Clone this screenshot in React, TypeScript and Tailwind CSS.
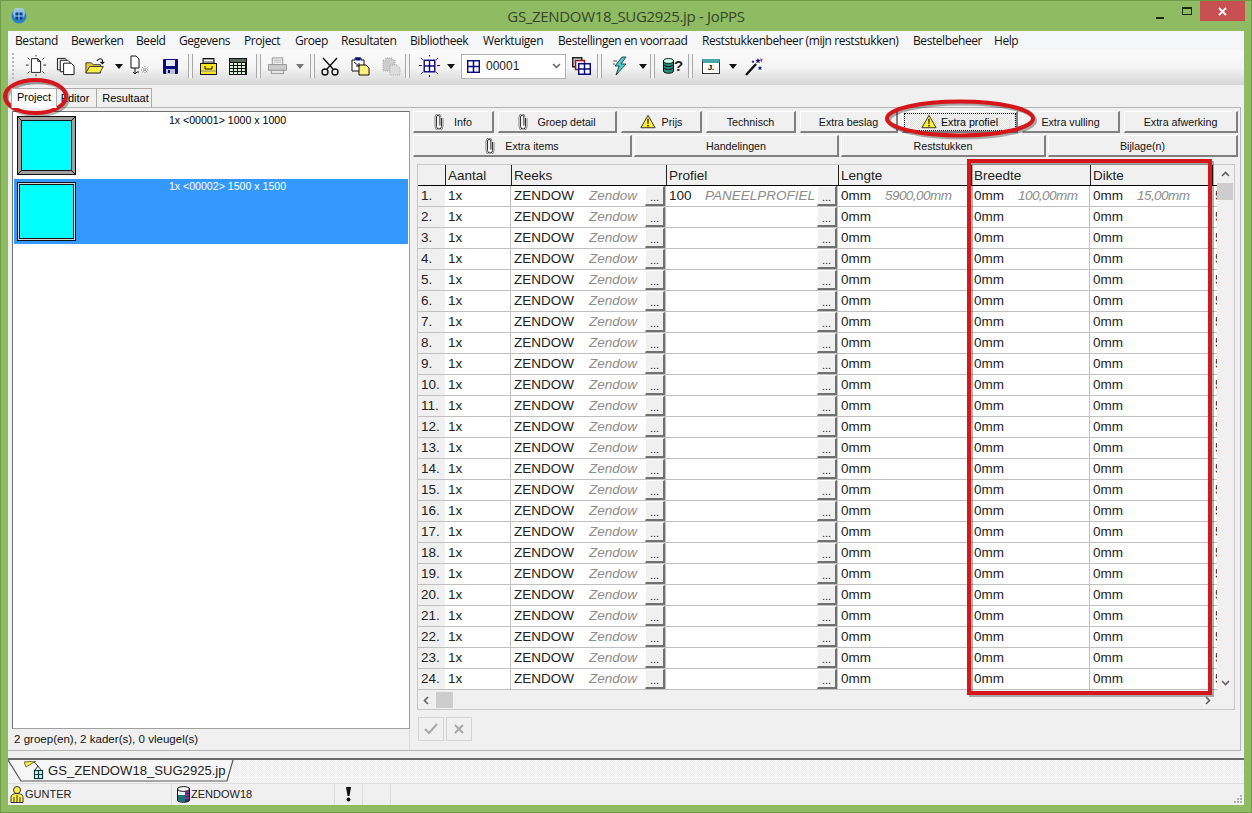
import React from "react";

const Clip = () => (
  <svg width="10" height="16" viewBox="0 0 10 16" fill="none" stroke="#333" strokeWidth="1">
    <path d="M7.5 4v8.5a2.5 2.5 0 0 1-5 0V3a1.7 1.7 0 0 1 3.4 0v8.5" />
    <path d="M9 4v8.5a4 4 0 0 1-8 0V3a3 3 0 0 1 6 0" stroke="#888" />
  </svg>
);
const Warn = () => (
  <svg width="16" height="15" viewBox="0 0 18 16">
    <path d="M9 1 17 15H1Z" fill="#ffee33" stroke="#222" strokeWidth="1" />
    <path d="M8.2 5h1.6l-.3 6h-1zM8.2 12h1.6v1.6H8.2z" fill="#111" />
  </svg>
);
const Rays = () => (
  <g stroke="#111" strokeWidth="1">
    <path d="M1 11h3M20 11h3M3 3l2 2M21 3l-2 2M3 20l2-2M21 20l-2-2M12 0v1.5M12 21v2" />
  </g>
);
const NewDoc = () => (
  <svg width="22" height="22" viewBox="0 0 24 24" fill="none">
    <Rays />
    <path d="M7 4h7l3 3v12H7Z" fill="#fff" stroke="#111" />
    <path d="M14 4v3h3" stroke="#111" />
  </svg>
);
const CopyDoc = () => (
  <svg width="19" height="19" viewBox="0 0 20 20" fill="#fff" stroke="#111">
    <path d="M1.5 1.5h8l2 2v10h-10Z" fill="#eee" />
    <path d="M4.5 3.5h8l2 2v10h-10Z" />
    <path d="M8 6.5h8l3 3v9H8Z" />
  </svg>
);
const Folder = () => (
  <svg width="22" height="19" viewBox="0 0 24 20">
    <path d="M1 6h6l2 2h8v9H1Z" fill="#e8c83a" stroke="#333" />
    <path d="M1 17l4-7h15l-4 7Z" fill="#fff04a" stroke="#333" />
    <path d="M13 4c2-3 5-3 6-1v3m-2-1 2 2 2-2" fill="none" stroke="#111" strokeWidth="1.2" />
  </svg>
);
const Caret = ({ gray }: { gray?: boolean }) => (
  <svg width="8" height="5" viewBox="0 0 8 5">
    <path d="M0 0h8L4 5Z" fill={gray ? "#777" : "#111"} />
  </svg>
);
const DocArrow = () => (
  <svg width="20" height="22" viewBox="0 0 20 22" fill="none">
    <path d="M1 1h5l3 3v9H1Z" fill="#fff" stroke="#111" />
    <path d="M5 13v6m-2-2 2 2 2-2M7 17h2" stroke="#111" />
    <g stroke="#888" strokeDasharray="1 1">
      <path d="M11 15h8M15 11v8M12 12l6 6M18 12l-6 6" />
    </g>
  </svg>
);
const Save = () => (
  <svg width="15" height="15" viewBox="0 0 15 15">
    <rect width="15" height="15" rx="1" fill="#0b0b80" />
    <rect x="3" y="1" width="9" height="6" fill="#e8e8f4" />
    <rect x="3" y="10" width="9" height="5" fill="#c0c0d0" />
    <rect x="5" y="11" width="2" height="3" fill="#0b0b80" />
  </svg>
);
const BoxIcon = () => (
  <svg width="17" height="17" viewBox="0 0 17 17">
    <rect x="3" y="0.5" width="11" height="5" fill="#999" stroke="#111" />
    <path d="M4 2.5h9" stroke="#fff" />
    <rect x="0.5" y="5.5" width="16" height="11" fill="#f8e71c" stroke="#111" />
    <path d="M5 8v3h7V8" fill="none" stroke="#111" />
    <path d="M1 13h15" stroke="#888" />
  </svg>
);
const TableIcon = () => (
  <svg width="18" height="17" viewBox="0 0 18 17">
    <rect width="18" height="17" fill="#111" />
    <rect x="1" y="1" width="16" height="3" fill="#5a6a5a" />
    {[5, 8, 11, 14].map((y) =>
      [1, 5, 9, 13].map((x) => <rect key={`${x}-${y}`} x={x} y={y} width="3" height="2" fill="#dcefd8" />)
    )}
  </svg>
);
const Printer = () => (
  <svg width="19" height="18" viewBox="0 0 20 18">
    <rect x="4.5" y="0.5" width="11" height="7" fill="#eee" stroke="#999" />
    <path d="M6 3h8M6 5h8" stroke="#bbb" />
    <rect x="0.5" y="7.5" width="19" height="6" fill="#ccc" stroke="#999" />
    <rect x="3.5" y="13.5" width="13" height="3.5" fill="#e4e4e4" stroke="#999" />
  </svg>
);
const Scissors = () => (
  <svg width="18" height="19" viewBox="0 0 18 19" fill="none" stroke="#111">
    <path d="M2 1 12 12M16 1 6 12" strokeWidth="1.4" />
    <circle cx="4" cy="15" r="3" strokeWidth="1.4" />
    <circle cx="14" cy="15" r="3" strokeWidth="1.4" />
  </svg>
);
const Paste = ({ gray }: { gray?: boolean }) => (
  <svg width="19" height="19" viewBox="0 0 19 19">
    <path
      d="M1 3h3V1h6v2h3v11H1Z"
      fill={gray ? "#ccc" : "#fff"}
      stroke={gray ? "#aaa" : "#111"}
      strokeDasharray={gray ? "1 1" : undefined}
    />
    {!gray && <rect x="4.5" y="0.5" width="5" height="3" fill="#0b0b80" />}
    <path
      d="M8 8h7l3 3v7H8Z"
      fill={gray ? "#ddd" : "#fff27a"}
      stroke={gray ? "#aaa" : "#111"}
      strokeDasharray={gray ? "1 1" : undefined}
    />
    {!gray && <path d="M3 5l5 4m0-3v3H5" fill="none" stroke="#111" />}
  </svg>
);
const WinGrid = ({ size = 13 }: { size?: number }) => (
  <svg width={size} height={size} viewBox="0 0 15 15">
    <rect x="0.75" y="0.75" width="13.5" height="13.5" fill="#fff" stroke="#0b0b80" strokeWidth="1.8" />
    <path d="M7.5 1v13M1 7.5h13" stroke="#0b0b80" strokeWidth="1.8" />
  </svg>
);
const WinRays = () => (
  <svg width="23" height="23" viewBox="0 0 24 24" fill="none">
    <Rays />
    <rect x="6.5" y="5.5" width="11" height="12" fill="#fff" stroke="#0b0b80" strokeWidth="1.5" />
    <path d="M12 6v11M7 11.5h10" stroke="#0b0b80" strokeWidth="1.5" />
  </svg>
);
const WinStack = () => (
  <svg width="19" height="18" viewBox="0 0 19 18" fill="none">
    <rect x="0.75" y="0.75" width="9" height="9" stroke="#222" strokeWidth="1.5" fill="#ddd" />
    <rect x="3.5" y="3.5" width="9" height="9" stroke="#8c1c1c" strokeWidth="1.5" fill="#eee" />
    <rect x="6.75" y="6.75" width="11.5" height="10.5" stroke="#0b0b80" strokeWidth="1.5" fill="#fff" />
    <path d="M12.5 7v10M7 12h11" stroke="#0b0b80" strokeWidth="1.5" />
  </svg>
);
const Bolt = () => (
  <svg width="15" height="20" viewBox="0 0 15 20">
    <path d="M9 1 2 10h4l-3 9 10-11H8l5-7Z" fill="#45d0d0" stroke="#222" strokeWidth="0.8" />
    <path d="M0 5h4M0 8h2" stroke="#555" />
  </svg>
);
const Db = () => (
  <svg width="11" height="16" viewBox="0 0 11 16">
    <path d="M0.5 3v10c0 3 10 3 10 0V3Z" fill="#2b8a7a" stroke="#111" />
    <ellipse cx="5.5" cy="3" rx="5" ry="2.4" fill="#cfe" stroke="#111" />
    <path d="M1 7c2 2 7 2 9 0M1 10c2 2 7 2 9 0" stroke="#111" fill="none" />
  </svg>
);
const Wand = () => (
  <svg width="19" height="19" viewBox="0 0 19 19">
    <path d="M1 18 11 7" stroke="#111" strokeWidth="2.4" />
    <path d="M13 1l.8 1.8 1.9.2-1.4 1.3.4 1.9-1.7-1-1.7 1 .4-1.9L10.3 3l1.9-.2Z" fill="#14147a" />
    <path d="M15.5 0.5l.8 1.5 1.7.2-1.2 1.1.3 1.7-1.6-.8Z" fill="#c02030" />
    <path d="M15 9l.7 1.3 1.5.2-1.1 1 .3 1.5-1.4-.7-1.4.7.3-1.5-1.1-1 1.5-.2Z" fill="#14147a" />
    <path d="M8 3l.5 1 1 .2-.8.7.2 1-.9-.5-.9.5.2-1-.8-.7 1-.2Z" fill="#14147a" />
  </svg>
);
const AppIcon = () => (
  <svg width="16" height="16" viewBox="0 0 16 16">
    <circle cx="8" cy="8" r="7.5" fill="#2f7fc8" />
    <circle cx="8" cy="5" r="6" fill="#bcdcf4" opacity="0.7" />
    <rect x="4.5" y="4.5" width="7" height="7" fill="#0a3f8a" />
    <path d="M8 4.5v7M4.5 8h7" stroke="#9fd0f4" />
  </svg>
);
const User = () => (
  <svg width="14" height="17" viewBox="0 0 14 17">
    <circle cx="7" cy="4" r="3.5" fill="#fff04a" stroke="#333" />
    <path d="M1 16.5v-5c0-3 3-4 6-4s6 1 6 4v5Z" fill="#fff04a" stroke="#333" />
    <path d="M4 11v5M7 9v7M10 11v5" stroke="#333" />
  </svg>
);
const DbColor = () => (
  <svg width="13" height="17" viewBox="0 0 13 17">
    <path d="M0.5 3v11c0 3 12 3 12 0V3Z" fill="#3a2a6a" stroke="#111" />
    <path d="M1 3v6h7V3Z" fill="#e8f0f0" />
    <path d="M1 9v6c2 1 4 1 7 1V9Z" fill="#20707a" />
    <path d="M8 6h4M8 9h4M8 12h4" stroke="#d040b0" />
    <ellipse cx="6.5" cy="3" rx="6" ry="2.4" fill="#f4f4f4" stroke="#111" />
  </svg>
);
const TabIcon = () => (
  <svg width="20" height="20" viewBox="0 0 20 20" fill="none">
    <path d="M0 1 12 0 2 6Z" fill="#f2f040" stroke="#333" strokeWidth="0.7" />
    <path d="M10 1l4 4" stroke="#333" />
    <path d="M14 5l-3 4M14 5l3 4" stroke="#333" />
    <rect x="10.5" y="9.5" width="8" height="8" fill="#dff4f0" stroke="#0d3a3a" strokeWidth="1.2" />
    <path d="M14.5 10v7M11 13.5h7" stroke="#0d3a3a" strokeWidth="1.2" />
  </svg>
);

const TBar = ({ w, children }: { w: string; children?: React.ReactNode }) => (
  <div className={`flex items-center justify-center h-full shrink-0 ${w}`}>{children}</div>
);
const Sep = () => (
  <div className="h-[24px] w-[5px] shrink-0 mr-[3px] border-x border-x-[#a8a8a8] bg-[#f4f4f4]" />
);

const menu: [string, string][] = [
  ["Bestand", "w-[56px]"],
  ["Bewerken", "w-[65px]"],
  ["Beeld", "w-[43px]"],
  ["Gegevens", "w-[65px]"],
  ["Project", "w-[51px]"],
  ["Groep", "w-[46px]"],
  ["Resultaten", "w-[69px]"],
  ["Bibliotheek", "w-[73px]"],
  ["Werktuigen", "w-[75px]"],
  ["Bestellingen en voorraad", "w-[144px]"],
  ["Reststukkenbeheer (mijn reststukken)", "w-[211px]"],
  ["Bestelbeheer", "w-[81px]"],
  ["Help", "w-[40px]"],
];

const Btn = ({
  w,
  icon,
  label,
  gap = "gap-[6px]",
}: {
  w: string;
  icon?: React.ReactNode;
  label: string;
  gap?: string;
}) => (
  <div
    className={`${w} h-[22px] shrink-0 flex items-center justify-center ${gap} bg-[#f0f0f0] border-t border-l border-t-white border-l-white border-b-2 border-r-2 border-b-[#808080] border-r-[#808080] text-[10.7px] text-[#111]`}
  >
    {icon}
    <span className="pt-[2px]">{label}</span>
  </div>
);

const Dots = () => (
  <div className="w-[20px] h-full shrink-0 flex items-end justify-center bg-[#f0f0f0] border-t border-l border-t-white border-l-white border-b-2 border-r-2 border-b-[#707070] border-r-[#707070] text-[11px] leading-[13px] text-[#222]">
    ...
  </div>
);

const Cell = ({
  w,
  main,
  hint,
  hintW,
  dots,
  tight,
}: {
  w: string;
  main?: string;
  hint?: string;
  hintW?: string;
  dots?: boolean;
  tight?: boolean;
}) => (
  <div className={`${w} h-[21px] shrink-0 flex items-center bg-white border-r border-b border-[#c0c0c0] overflow-hidden`}>
    <div className="flex-1 min-w-0 flex items-center pl-[3px] whitespace-nowrap overflow-hidden">
      {main && <span className={hintW}>{main}</span>}
      {hint && <span className={`italic text-[#8c8c8c] ${tight ? "tracking-[-0.55px]" : ""}`}>{hint}</span>}
    </div>
    {dots && <Dots />}
  </div>
);

const Head = ({ w, label }: { w: string; label?: string }) => (
  <div className={`${w} h-[21px] shrink-0 flex items-center pl-[2px] pt-[2px] bg-[#f0f0f0] border-l border-l-[#222] border-b border-b-black`}>
    {label}
  </div>
);

const rows = Array.from({ length: 24 }, (_, i) => i + 1);

export default function App() {
  return (
    <div className="relative w-[1252px] h-[813px] overflow-hidden flex flex-col bg-[#8fbb62] border border-[#6f9a48] font-['Liberation_Sans',Arial,sans-serif] text-black">
      {/* Title bar */}
      <div className="h-[30px] shrink-0 grid grid-cols-[1fr_auto_1fr] items-start">
        <div className="pl-[10px] pt-[7px]">
          <AppIcon />
        </div>
        <div className="pt-[5px] text-[15px] leading-[20px] text-[#34452a] font-['Open_Sans',sans-serif] tracking-[-0.33px]">
          GS_ZENDOW18_SUG2925.jp - JoPPS
        </div>
        <div className="flex justify-end items-start pr-[6px]">
          <div className="w-[27px] h-[20px] flex items-center justify-center mt-[3px]">
            <div className="w-[8px] h-[2px] mt-[8px] bg-[#1c2a10]" />
          </div>
          <div className="w-[27px] h-[20px] flex items-center justify-center">
            <div className="w-[10px] h-[8px] border border-t-2 border-[#1c2a10]" />
          </div>
          <div className="w-[45px] h-[20px] flex items-center justify-center bg-[#c75050] text-white">
            <svg width="9" height="9" viewBox="0 0 9 9" stroke="#fff" strokeWidth="1.8">
              <path d="M1 1l7 7M8 1 1 8" />
            </svg>
          </div>
        </div>
      </div>

      {/* Client */}
      <div className="flex-1 min-h-0 mx-[7px] mb-[7px] flex flex-col bg-[#f0f0f0]">
        {/* Menu */}
        <div className="h-[19px] shrink-0 flex items-center pl-[7px] bg-[#f5f6f7] text-[12px] text-[#111] font-['Open_Sans',sans-serif] tracking-[-0.42px] whitespace-nowrap">
          {menu.map(([label, w]) => (
            <div key={label} className={`${w} shrink-0`}>
              {label}
            </div>
          ))}
        </div>

        {/* Toolbar */}
        <div className="h-[35px] shrink-0 flex items-center pl-[4px] pb-[3px] bg-gradient-to-b from-[#fbfbfb] via-[#f4f4f4] to-[#d6d6d6]">
          <div className="w-[3px] h-[26px] mr-[9px] shrink-0 border-l-2 border-dotted border-[#b8b8b8]" />
          <TBar w="w-[24px]"><NewDoc /></TBar>
          <TBar w="w-[34px]"><CopyDoc /></TBar>
          <TBar w="w-[28px]"><Folder /></TBar>
          <TBar w="w-[18px]"><Caret /></TBar>
          <TBar w="w-[24px]"><DocArrow /></TBar>
          <TBar w="w-[36px]"><Save /></TBar>
          <Sep />
          <TBar w="w-[24px]"><BoxIcon /></TBar>
          <TBar w="w-[36px]"><TableIcon /></TBar>
          <Sep />
          <TBar w="w-[26px]"><Printer /></TBar>
          <TBar w="w-[20px]"><Caret gray /></TBar>
          <Sep />
          <TBar w="w-[24px]"><Scissors /></TBar>
          <TBar w="w-[36px]"><Paste /></TBar>
          <TBar w="w-[27px]"><Paste gray /></TBar>
          <Sep />
          <TBar w="w-[32px]"><WinRays /></TBar>
          <TBar w="w-[12px]"><Caret /></TBar>
          <div className="w-[105px] h-[25px] shrink-0 flex items-center gap-[6px] pl-[5px] bg-white border border-[#b0b0b0] text-[12px] ml-[4px]">
            <WinGrid />
            <span className="flex-1 text-[#222]">00001</span>
            <svg width="9" height="6" viewBox="0 0 9 6" fill="none" stroke="#666" strokeWidth="1.5" className="mr-[4px]">
              <path d="M1 1l3.5 3.5L8 1" />
            </svg>
          </div>
          <TBar w="w-[31px]"><WinStack /></TBar>
          <Sep />
          <TBar w="w-[30px]"><Bolt /></TBar>
          <TBar w="w-[15px]"><Caret /></TBar>
          <Sep />
          <TBar w="w-[30px]">
            <div className="flex items-center">
              <Db />
              <span className="text-[15px] font-bold text-[#222]">?</span>
            </div>
          </TBar>
          <Sep />
          <TBar w="w-[30px]">
            <div className="w-[18px] h-[15px] border border-[#333] border-t-[4px] border-t-[#4aa8a8] bg-white flex items-center justify-center text-[8px] font-bold leading-none">
              J.
            </div>
          </TBar>
          <TBar w="w-[14px]"><Caret /></TBar>
          <TBar w="w-[28px]"><Wand /></TBar>
        </div>

        {/* Tabs */}
        <div className="h-[22px] shrink-0 flex items-end pl-[3px] text-[11px]">
          <div className="w-[46px] h-[20px] mb-[-1px] pb-[3px] z-10 flex items-center justify-center bg-white border border-b-0 border-[#ababab]">
            Project
          </div>
          <div className="w-[40px] h-[19px] pt-[1px] pr-[3px] flex items-center justify-center bg-[#f0f0f0] border border-b-0 border-l-0 border-[#ababab]">
            Editor
          </div>
          <div className="w-[55px] h-[19px] pt-[1px] pl-[3px] flex items-center justify-center bg-[#f0f0f0] border border-b-0 border-l-0 border-[#ababab]">
            Resultaat
          </div>
        </div>

        {/* Main panel */}
        <div className="h-[644px] shrink-0 w-[1233px] flex border-t border-r border-b border-[#b4b4b4]">
          {/* Left */}
          <div className="w-[402px] shrink-0 flex flex-col pl-[4px] pt-[3px]">
            <div className="flex-1 min-h-0 bg-white border border-t-[#707070] border-l-[#707070] border-r-[#a0a0a0] border-b-[#a0a0a0] px-[1px] text-[10.6px]">
              <div className="h-[67px] flex">
                <div className="w-[62px] pl-[3px] pt-[4px] shrink-0">
                  <svg width="59" height="59" viewBox="0 0 59 59">
                    <rect width="59" height="59" fill="#111" />
                    <rect x="1" y="1" width="57" height="57" fill="#a0a0a0" />
                    <rect x="4" y="4" width="51" height="51" fill="#111" />
                    <rect x="5" y="5" width="49" height="49" fill="#00ffff" />
                    <path d="M1 1l4 4M58 1l-4 4M1 58l4-4M58 58l-4-4" stroke="#111" />
                  </svg>
                </div>
                <div className="flex-1 text-center leading-[15px] pr-[62px]">
                  <span className="block pl-[33px] pt-[1px]">1x &lt;00001&gt; 1000 x 1000</span>
                </div>
              </div>
              <div className="h-[65px] flex bg-[#3399ff] text-white">
                <div className="w-[62px] pl-[3px] pt-[3px] shrink-0">
                  <svg width="59" height="59" viewBox="0 0 59 59">
                    <rect width="59" height="59" fill="#111" />
                    <rect x="1" y="1" width="57" height="57" fill="#d8d8d8" />
                    <rect x="2" y="2" width="55" height="55" fill="#111" />
                    <rect x="3" y="3" width="53" height="53" fill="#00ffff" />
                  </svg>
                </div>
                <div className="flex-1 text-center leading-[15px] pr-[62px]">
                  <span className="block pl-[33px]">1x &lt;00002&gt; 1500 x 1500</span>
                </div>
              </div>
            </div>
            <div className="h-[21px] shrink-0 flex items-center pl-[2px] text-[11.55px] border-r border-[#dcdcdc] text-[#111]">
              2 groep(en), 2 kader(s), 0 vleugel(s)
            </div>
          </div>

          {/* Right */}
          <div className="flex-1 min-w-0 flex flex-col pl-[3px] pt-[3px]">
            <div className="flex gap-[4px]">
              <Btn w="w-[81px]" icon={<Clip />} label="Info" gap="gap-[10px]" />
              <Btn w="w-[119px]" icon={<Clip />} label="Groep detail" gap="gap-[9px]" />
              <Btn w="w-[81px]" icon={<Warn />} label="Prijs" />
              <Btn w="w-[90px]" label="Technisch" />
              <Btn w="w-[98px]" label="Extra beslag" />
              <div className="w-[116px] h-[22px] shrink-0 flex items-center justify-center gap-[4px] bg-[repeating-conic-gradient(#dddddd_0_25%,#ffffff_0_50%)] bg-[length:2px_2px] border-t border-l border-t-white border-l-white border-b-2 border-r-2 border-b-[#808080] border-r-[#808080] text-[10.7px] outline-1 outline-dotted outline-offset-[-3px] outline-black">
                <Warn />
                <span className="pt-[2px]">Extra profiel</span>
              </div>
              <Btn w="w-[98px]" label="Extra vulling" />
              <Btn w="w-[114px]" label="Extra afwerking" />
            </div>
            <div className="flex gap-[2px] mt-[2px]">
              <Btn w="w-[219px]" icon={<Clip />} label="Extra items" gap="gap-[10px]" />
              <Btn w="w-[205px]" label="Handelingen" />
              <Btn w="w-[205px]" label="Reststukken" />
              <Btn w="w-[190px]" label="Bijlage(n)" />
            </div>

            {/* Grid */}
            <div className="w-[818px] h-[546px] ml-[4px] mt-[7px] flex flex-col border border-[#c8c8c8] text-[13.5px] text-[#222]">
              <div className="h-[526px] flex">
                <div className="w-[799px] shrink-0 overflow-hidden">
                  <div className="flex w-[820px]">
                    <div className="w-[27px] h-[21px] shrink-0 bg-[#f0f0f0] border-b border-b-black" />
                    <Head w="w-[66px]" label="Aantal" />
                    <Head w="w-[155px]" label="Reeks" />
                    <Head w="w-[172px]" label="Profiel" />
                    <Head w="w-[133px]" label="Lengte" />
                    <Head w="w-[119px]" label="Breedte" />
                    <Head w="w-[122px]" label="Dikte" />
                    <Head w="w-[26px]" />
                  </div>
                  {rows.map((n) => (
                    <div key={n} className="flex w-[820px]">
                      <div className="w-[27px] h-[21px] shrink-0 flex items-center pl-[3px] bg-[#f0f0f0] border-b border-b-[#c0c0c0]">
                        {n}.
                      </div>
                      <Cell w="w-[66px]" main="1x" />
                      <Cell w="w-[155px]" main="ZENDOW" hintW="w-[75px] shrink-0" hint="Zendow" dots />
                      <Cell
                        w="w-[172px]"
                        main={n === 1 ? "100" : undefined}
                        hintW="w-[36px] shrink-0"
                        hint={n === 1 ? "PANEELPROFIEL" : undefined}
                        dots
                      />
                      <Cell
                        w="w-[133px]"
                        main="0mm"
                        hintW="w-[44px] shrink-0"
                        hint={n === 1 ? "5900,00mm" : undefined}
                        tight
                      />
                      <Cell
                        w="w-[119px]"
                        main="0mm"
                        hintW="w-[44px] shrink-0"
                        hint={n === 1 ? "100,00mm" : undefined}
                        tight
                      />
                      <Cell
                        w="w-[122px]"
                        main="0mm"
                        hintW="w-[44px] shrink-0"
                        hint={n === 1 ? "15,00mm" : undefined}
                        tight
                      />
                      <Cell w="w-[26px]" main="5" />
                    </div>
                  ))}
                </div>
                <div className="w-[16px] shrink-0 flex flex-col items-center bg-[#f0f0f0]">
                  <div className="h-[18px] flex items-center">
                    <svg width="9" height="6" viewBox="0 0 9 6" fill="none" stroke="#606060" strokeWidth="1.6">
                      <path d="M1 5l3.5-3.5L8 5" />
                    </svg>
                  </div>
                  <div className="w-full h-[17px] bg-[#cdcdcd]" />
                  <div className="flex-1" />
                  <div className="h-[16px] flex items-center">
                    <svg width="9" height="6" viewBox="0 0 9 6" fill="none" stroke="#606060" strokeWidth="1.6">
                      <path d="M1 1l3.5 3.5L8 1" />
                    </svg>
                  </div>
                </div>
              </div>
              <div className="h-[18px] flex items-center bg-[#f0f0f0] pl-[5px]">
                <svg width="6" height="9" viewBox="0 0 6 9" fill="none" stroke="#606060" strokeWidth="1.6">
                  <path d="M5 1 1.5 4.5 5 8" />
                </svg>
                <div className="w-[17px] h-[16px] ml-[7px] bg-[#cdcdcd]" />
                <div className="flex-1" />
                <svg width="6" height="9" viewBox="0 0 6 9" fill="none" stroke="#606060" strokeWidth="1.6" className="mr-[23px]">
                  <path d="M1 1l3.5 3.5L1 8" />
                </svg>
              </div>
            </div>

            {/* Apply buttons */}
            <div className="flex gap-[2px] ml-[5px] mt-[7px]">
              <div className="w-[26px] h-[24px] flex items-center justify-center border border-[#d4d4d4]">
                <svg width="14" height="12" viewBox="0 0 14 12" fill="none" stroke="#a8a8a8" strokeWidth="2">
                  <path d="M1 6l4 4 8-9" />
                </svg>
              </div>
              <div className="w-[26px] h-[24px] flex items-center justify-center border border-[#d4d4d4]">
                <svg width="10" height="10" viewBox="0 0 10 10" fill="none" stroke="#a8a8a8" strokeWidth="2">
                  <path d="M1 1l8 8M9 1 1 9" />
                </svg>
              </div>
            </div>
          </div>
        </div>

        {/* Document tab strip */}
        <div className="h-[26px] shrink-0 mt-[7px] flex border-t-2 border-t-[#696969] border-b border-b-[#dcdcdc] bg-[repeating-conic-gradient(#ebebeb_0_25%,#ffffff_0_50%)] bg-[length:2px_2px]">
          <div className="relative w-[226px] h-[22px] shrink-0 flex items-center pl-[16px] text-[13.1px] text-[#222]">
            <svg width="226" height="22" viewBox="0 0 226 22" fill="none" className="absolute left-0 top-0">
              <path d="M0 0 13 21H219L225 0" fill="#f6f6f6" stroke="#555" strokeWidth="1.2" />
            </svg>
            <span className="relative flex items-center gap-[4px]">
              <TabIcon />
              GS_ZENDOW18_SUG2925.jp
            </span>
          </div>
        </div>

        {/* Status bar */}
        <div className="flex-1 min-h-0 flex items-center text-[11px] text-[#222]">
          <div className="w-[164px] h-full shrink-0 flex items-center pl-[2px] gap-[1px] border-r border-[#dcdcdc]">
            <User />
            GUNTER
          </div>
          <div className="w-[163px] h-full shrink-0 flex items-center pl-[5px] gap-[1px] border-r border-[#dcdcdc]">
            <DbColor />
            ZENDOW18
          </div>
          <div className="w-[28px] h-full shrink-0 flex items-center justify-center border-r border-[#dcdcdc]">
            <svg width="5" height="15" viewBox="0 0 5 15">
              <path d="M0 0h5L3.5 9h-2Z" fill="#111" />
              <circle cx="2.5" cy="12.5" r="2" fill="#111" />
            </svg>
          </div>
          <div className="w-[28px] h-full shrink-0 border-r border-[#dcdcdc]" />
          <div className="flex-1 h-full flex items-end justify-end pr-[1px] pb-[1px]">
            <svg width="10" height="10" viewBox="0 0 10 10" fill="#b0b0b0">
              <rect x="7" y="1" width="2" height="2" />
              <rect x="4" y="4" width="2" height="2" />
              <rect x="7" y="4" width="2" height="2" />
              <rect x="1" y="7" width="2" height="2" />
              <rect x="4" y="7" width="2" height="2" />
              <rect x="7" y="7" width="2" height="2" />
            </svg>
          </div>
        </div>
      </div>

      {/* Red annotations drawn over the screenshot */}
      <svg width="1252" height="813" viewBox="0 0 1252 813" fill="none" className="absolute left-[-1px] top-[-1px] pointer-events-none">
        <g stroke="#000" strokeOpacity="0.3" strokeWidth="4" transform="translate(2 2)">
          <ellipse cx="35.5" cy="96.5" rx="30.5" ry="16.5" />
          <ellipse cx="960" cy="118.5" rx="73" ry="17" />
          <rect x="969" y="161" width="241" height="532" />
        </g>
        <g stroke="#d5161a" strokeWidth="4">
          <ellipse cx="35.5" cy="96.5" rx="30.5" ry="16.5" />
          <ellipse cx="960" cy="118.5" rx="73" ry="17" />
          <rect x="969" y="161" width="241" height="532" />
        </g>
      </svg>
    </div>
  );
}
